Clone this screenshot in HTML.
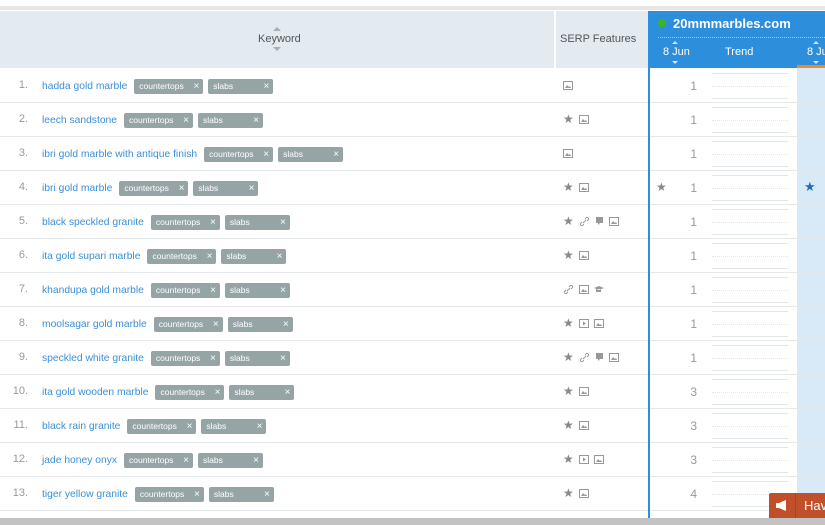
<!DOCTYPE html>
<html><head><meta charset="utf-8"><style>
*{margin:0;padding:0;box-sizing:border-box}
body{width:825px;height:525px;overflow:hidden;background:#fff;font-family:"Liberation Sans",Arial,sans-serif;position:relative}
.topbar{position:absolute;left:0;top:6px;width:825px;height:4px;background:#e6e6e6}
.hdr{position:absolute;top:11px;left:0;width:648px;height:57px;background:#e3eaf0}
.hsep{position:absolute;top:11px;left:554px;width:2px;height:57px;background:#fff}
.blue{position:absolute;top:11px;left:648px;width:177px;height:57px;background:#2d8fdc;color:#fff;white-space:nowrap;overflow:hidden}
.row{position:absolute;left:0;width:825px;height:34px;border-bottom:1px solid #e5e9eb}
.num{position:absolute;right:797px;top:10px;font-size:11px;color:#999}
.kw{position:absolute;left:42px;top:10px;font-size:10.3px;color:#3a8fd8;white-space:nowrap;display:flex;align-items:center;height:15px}
.tag{display:inline-block;height:15px;line-height:15px;background:#95a5a6;color:#fff;font-size:8.5px;padding-left:5px;margin-left:7px;border-radius:2px;position:relative}
.tag.c{width:69px}.tag.s{width:65px;margin-left:5px}
.tag i{position:absolute;right:4px;top:0;font-style:normal;font-size:10px}
.serp{position:absolute;left:563px;top:9px;display:flex;gap:5px;align-items:center;height:14px}
.st{color:#888;font-size:12px}
.pos{position:absolute;left:650px;width:47px;text-align:right;top:10px;font-size:12px;color:#999}
.tr{position:absolute;left:712px;width:76px;height:34px;top:0}
.tr b{position:absolute;left:0;width:76px;height:1px;background:#e3e6e8}
.hl{position:absolute;left:797px;top:68px;width:28px;height:450px;background:#d8eaf8}
.vline{position:absolute;left:648px;top:68px;width:2px;height:450px;background:#2d8fdc}
.bottom{position:absolute;left:0;top:518px;width:825px;height:7px;background:#c3c3c3}
</style></head><body>
<div class="topbar"></div>
<div class="hdr"></div>
<div class="hsep"></div>
<div style="position:absolute;left:258px;top:33px;font-size:11px;color:#555">Keyword</div>
<div style="position:absolute;left:273px;top:27px;width:0;height:0;border:4px solid transparent;border-bottom-color:#aab;border-top:0"></div>
<div style="position:absolute;left:273px;top:47px;width:0;height:0;border:4px solid transparent;border-top-color:#aab;border-bottom:0"></div>
<div style="position:absolute;left:560px;top:33px;font-size:11px;color:#555">SERP Features</div>
<div class="blue">
<div style="position:absolute;left:10px;top:8px;width:8px;height:8px;border-radius:50%;background:#3cb521"></div>
<div style="position:absolute;left:25px;top:5px;font-size:13px;font-weight:bold">20mmmarbles.com</div>
<div style="position:absolute;left:10px;top:26px;width:167px;border-top:1px dotted #9cc9ef"></div>
<div style="position:absolute;left:15px;top:35px;font-size:11px">8 Jun</div>
<div style="position:absolute;left:77px;top:35px;font-size:11px">Trend</div>
<div style="position:absolute;left:159px;top:35px;font-size:11px">8 Jun</div>
<div style="position:absolute;left:24px;top:30px;border:3px solid transparent;border-bottom:3px solid #cfe4f7;border-top:0"></div>
<div style="position:absolute;left:24px;top:50px;border:3px solid transparent;border-top:3px solid #cfe4f7;border-bottom:0"></div>
<div style="position:absolute;left:165px;top:30px;border:3px solid transparent;border-bottom:3px solid #cfe4f7;border-top:0"></div>
<div style="position:absolute;left:165px;top:50px;border:3px solid transparent;border-top:3px solid #cfe4f7;border-bottom:0"></div>
<div style="position:absolute;left:149px;top:54px;width:28px;height:3px;background:#f08a24"></div>
</div>
<div class="hl"></div>
<div id="rows">
<div class="row" style="top:69px"><span class="num">1.</span><span class="kw">hadda gold marble<span class="tag c">countertops<i>×</i></span><span class="tag s">slabs<i>×</i></span></span><span class="serp"><svg width="10" height="9"><rect x=".5" y=".5" width="9" height="8" fill="none" stroke="#999"/><path d="M2 7l2-3 2 2 1-1 1 2z" fill="#999"/></svg></span><span class="pos">1</span><span class="tr"><b style="top:4px"></b><b style="top:17px;background:none;border-top:1px dotted #e3e6e8"></b><b style="top:29px"></b></span></div>
<div class="row" style="top:103px"><span class="num">2.</span><span class="kw">leech sandstone<span class="tag c">countertops<i>×</i></span><span class="tag s">slabs<i>×</i></span></span><span class="serp"><span class="st">★</span><svg width="10" height="9"><rect x=".5" y=".5" width="9" height="8" fill="none" stroke="#999"/><path d="M2 7l2-3 2 2 1-1 1 2z" fill="#999"/></svg></span><span class="pos">1</span><span class="tr"><b style="top:4px"></b><b style="top:17px;background:none;border-top:1px dotted #e3e6e8"></b><b style="top:29px"></b></span></div>
<div class="row" style="top:137px"><span class="num">3.</span><span class="kw">ibri gold marble with antique finish<span class="tag c">countertops<i>×</i></span><span class="tag s">slabs<i>×</i></span></span><span class="serp"><svg width="10" height="9"><rect x=".5" y=".5" width="9" height="8" fill="none" stroke="#999"/><path d="M2 7l2-3 2 2 1-1 1 2z" fill="#999"/></svg></span><span class="pos">1</span><span class="tr"><b style="top:4px"></b><b style="top:17px;background:none;border-top:1px dotted #e3e6e8"></b><b style="top:29px"></b></span></div>
<div class="row" style="top:171px"><span class="num">4.</span><span class="kw">ibri gold marble<span class="tag c">countertops<i>×</i></span><span class="tag s">slabs<i>×</i></span></span><span class="serp"><span class="st">★</span><svg width="10" height="9"><rect x=".5" y=".5" width="9" height="8" fill="none" stroke="#999"/><path d="M2 7l2-3 2 2 1-1 1 2z" fill="#999"/></svg></span><span class="st" style="position:absolute;left:656px;top:9px">★</span><span class="pos">1</span><span class="tr"><b style="top:4px"></b><b style="top:17px;background:none;border-top:1px dotted #e3e6e8"></b><b style="top:29px"></b></span><span style="position:absolute;left:804px;top:8px;color:#1a6fc0;font-size:13px">★</span></div>
<div class="row" style="top:205px"><span class="num">5.</span><span class="kw">black speckled granite<span class="tag c">countertops<i>×</i></span><span class="tag s">slabs<i>×</i></span></span><span class="serp"><span class="st">★</span><svg width="11" height="11"><path d="M4 7l3-3M3 6l-1.5 1.5a1.5 1.5 0 0 0 2 2L5 8M8 5l1.5-1.5a1.5 1.5 0 0 0-2-2L6 3" fill="none" stroke="#999"/></svg><svg width="9" height="10"><path d="M1 1h7v6H5l-2 2V7H1z" fill="#999"/></svg><svg width="10" height="9"><rect x=".5" y=".5" width="9" height="8" fill="none" stroke="#999"/><path d="M2 7l2-3 2 2 1-1 1 2z" fill="#999"/></svg></span><span class="pos">1</span><span class="tr"><b style="top:4px"></b><b style="top:17px;background:none;border-top:1px dotted #e3e6e8"></b><b style="top:29px"></b></span></div>
<div class="row" style="top:239px"><span class="num">6.</span><span class="kw">ita gold supari marble<span class="tag c">countertops<i>×</i></span><span class="tag s">slabs<i>×</i></span></span><span class="serp"><span class="st">★</span><svg width="10" height="9"><rect x=".5" y=".5" width="9" height="8" fill="none" stroke="#999"/><path d="M2 7l2-3 2 2 1-1 1 2z" fill="#999"/></svg></span><span class="pos">1</span><span class="tr"><b style="top:4px"></b><b style="top:17px;background:none;border-top:1px dotted #e3e6e8"></b><b style="top:29px"></b></span></div>
<div class="row" style="top:273px"><span class="num">7.</span><span class="kw">khandupa gold marble<span class="tag c">countertops<i>×</i></span><span class="tag s">slabs<i>×</i></span></span><span class="serp"><svg width="11" height="11"><path d="M4 7l3-3M3 6l-1.5 1.5a1.5 1.5 0 0 0 2 2L5 8M8 5l1.5-1.5a1.5 1.5 0 0 0-2-2L6 3" fill="none" stroke="#999"/></svg><svg width="10" height="9"><rect x=".5" y=".5" width="9" height="8" fill="none" stroke="#999"/><path d="M2 7l2-3 2 2 1-1 1 2z" fill="#999"/></svg><svg width="10" height="9"><path d="M0 3l5-2 5 2-5 2z M2 4v3h5V4" fill="#999"/></svg></span><span class="pos">1</span><span class="tr"><b style="top:4px"></b><b style="top:17px;background:none;border-top:1px dotted #e3e6e8"></b><b style="top:29px"></b></span></div>
<div class="row" style="top:307px"><span class="num">8.</span><span class="kw">moolsagar gold marble<span class="tag c">countertops<i>×</i></span><span class="tag s">slabs<i>×</i></span></span><span class="serp"><span class="st">★</span><svg width="10" height="9"><rect x=".5" y=".5" width="9" height="8" fill="none" stroke="#999"/><path d="M4 2.5v4l3-2z" fill="#999"/></svg><svg width="10" height="9"><rect x=".5" y=".5" width="9" height="8" fill="none" stroke="#999"/><path d="M2 7l2-3 2 2 1-1 1 2z" fill="#999"/></svg></span><span class="pos">1</span><span class="tr"><b style="top:4px"></b><b style="top:17px;background:none;border-top:1px dotted #e3e6e8"></b><b style="top:29px"></b></span></div>
<div class="row" style="top:341px"><span class="num">9.</span><span class="kw">speckled white granite<span class="tag c">countertops<i>×</i></span><span class="tag s">slabs<i>×</i></span></span><span class="serp"><span class="st">★</span><svg width="11" height="11"><path d="M4 7l3-3M3 6l-1.5 1.5a1.5 1.5 0 0 0 2 2L5 8M8 5l1.5-1.5a1.5 1.5 0 0 0-2-2L6 3" fill="none" stroke="#999"/></svg><svg width="9" height="10"><path d="M1 1h7v6H5l-2 2V7H1z" fill="#999"/></svg><svg width="10" height="9"><rect x=".5" y=".5" width="9" height="8" fill="none" stroke="#999"/><path d="M2 7l2-3 2 2 1-1 1 2z" fill="#999"/></svg></span><span class="pos">1</span><span class="tr"><b style="top:4px"></b><b style="top:17px;background:none;border-top:1px dotted #e3e6e8"></b><b style="top:29px"></b></span></div>
<div class="row" style="top:375px"><span class="num">10.</span><span class="kw">ita gold wooden marble<span class="tag c">countertops<i>×</i></span><span class="tag s">slabs<i>×</i></span></span><span class="serp"><span class="st">★</span><svg width="10" height="9"><rect x=".5" y=".5" width="9" height="8" fill="none" stroke="#999"/><path d="M2 7l2-3 2 2 1-1 1 2z" fill="#999"/></svg></span><span class="pos">3</span><span class="tr"><b style="top:4px"></b><b style="top:17px;background:none;border-top:1px dotted #e3e6e8"></b><b style="top:29px"></b></span></div>
<div class="row" style="top:409px"><span class="num">11.</span><span class="kw">black rain granite<span class="tag c">countertops<i>×</i></span><span class="tag s">slabs<i>×</i></span></span><span class="serp"><span class="st">★</span><svg width="10" height="9"><rect x=".5" y=".5" width="9" height="8" fill="none" stroke="#999"/><path d="M2 7l2-3 2 2 1-1 1 2z" fill="#999"/></svg></span><span class="pos">3</span><span class="tr"><b style="top:4px"></b><b style="top:17px;background:none;border-top:1px dotted #e3e6e8"></b><b style="top:29px"></b></span></div>
<div class="row" style="top:443px"><span class="num">12.</span><span class="kw">jade honey onyx<span class="tag c">countertops<i>×</i></span><span class="tag s">slabs<i>×</i></span></span><span class="serp"><span class="st">★</span><svg width="10" height="9"><rect x=".5" y=".5" width="9" height="8" fill="none" stroke="#999"/><path d="M4 2.5v4l3-2z" fill="#999"/></svg><svg width="10" height="9"><rect x=".5" y=".5" width="9" height="8" fill="none" stroke="#999"/><path d="M2 7l2-3 2 2 1-1 1 2z" fill="#999"/></svg></span><span class="pos">3</span><span class="tr"><b style="top:4px"></b><b style="top:17px;background:none;border-top:1px dotted #e3e6e8"></b><b style="top:29px"></b></span></div>
<div class="row" style="top:477px"><span class="num">13.</span><span class="kw">tiger yellow granite<span class="tag c">countertops<i>×</i></span><span class="tag s">slabs<i>×</i></span></span><span class="serp"><span class="st">★</span><svg width="10" height="9"><rect x=".5" y=".5" width="9" height="8" fill="none" stroke="#999"/><path d="M2 7l2-3 2 2 1-1 1 2z" fill="#999"/></svg></span><span class="pos">4</span><span class="tr"><b style="top:4px"></b><b style="top:17px;background:none;border-top:1px dotted #e3e6e8"></b><b style="top:29px"></b></span></div>
</div>
<div class="vline"></div>
<div style="position:absolute;left:769px;top:493px;width:56px;height:25px;background:#c0502a;border-radius:2px 0 0 0">
<svg style="position:absolute;left:6px;top:7px" width="14" height="11"><path d="M1 3h3l7-3v11l-7-3H1z M3 8l1 3" fill="#fff"/></svg>
<div style="position:absolute;left:26px;top:0;width:1px;height:25px;background:#a84423"></div>
<div style="position:absolute;left:35px;top:5px;color:#fff;font-size:13px">Hav</div>
</div>
<div class="bottom"></div>
</body></html>
